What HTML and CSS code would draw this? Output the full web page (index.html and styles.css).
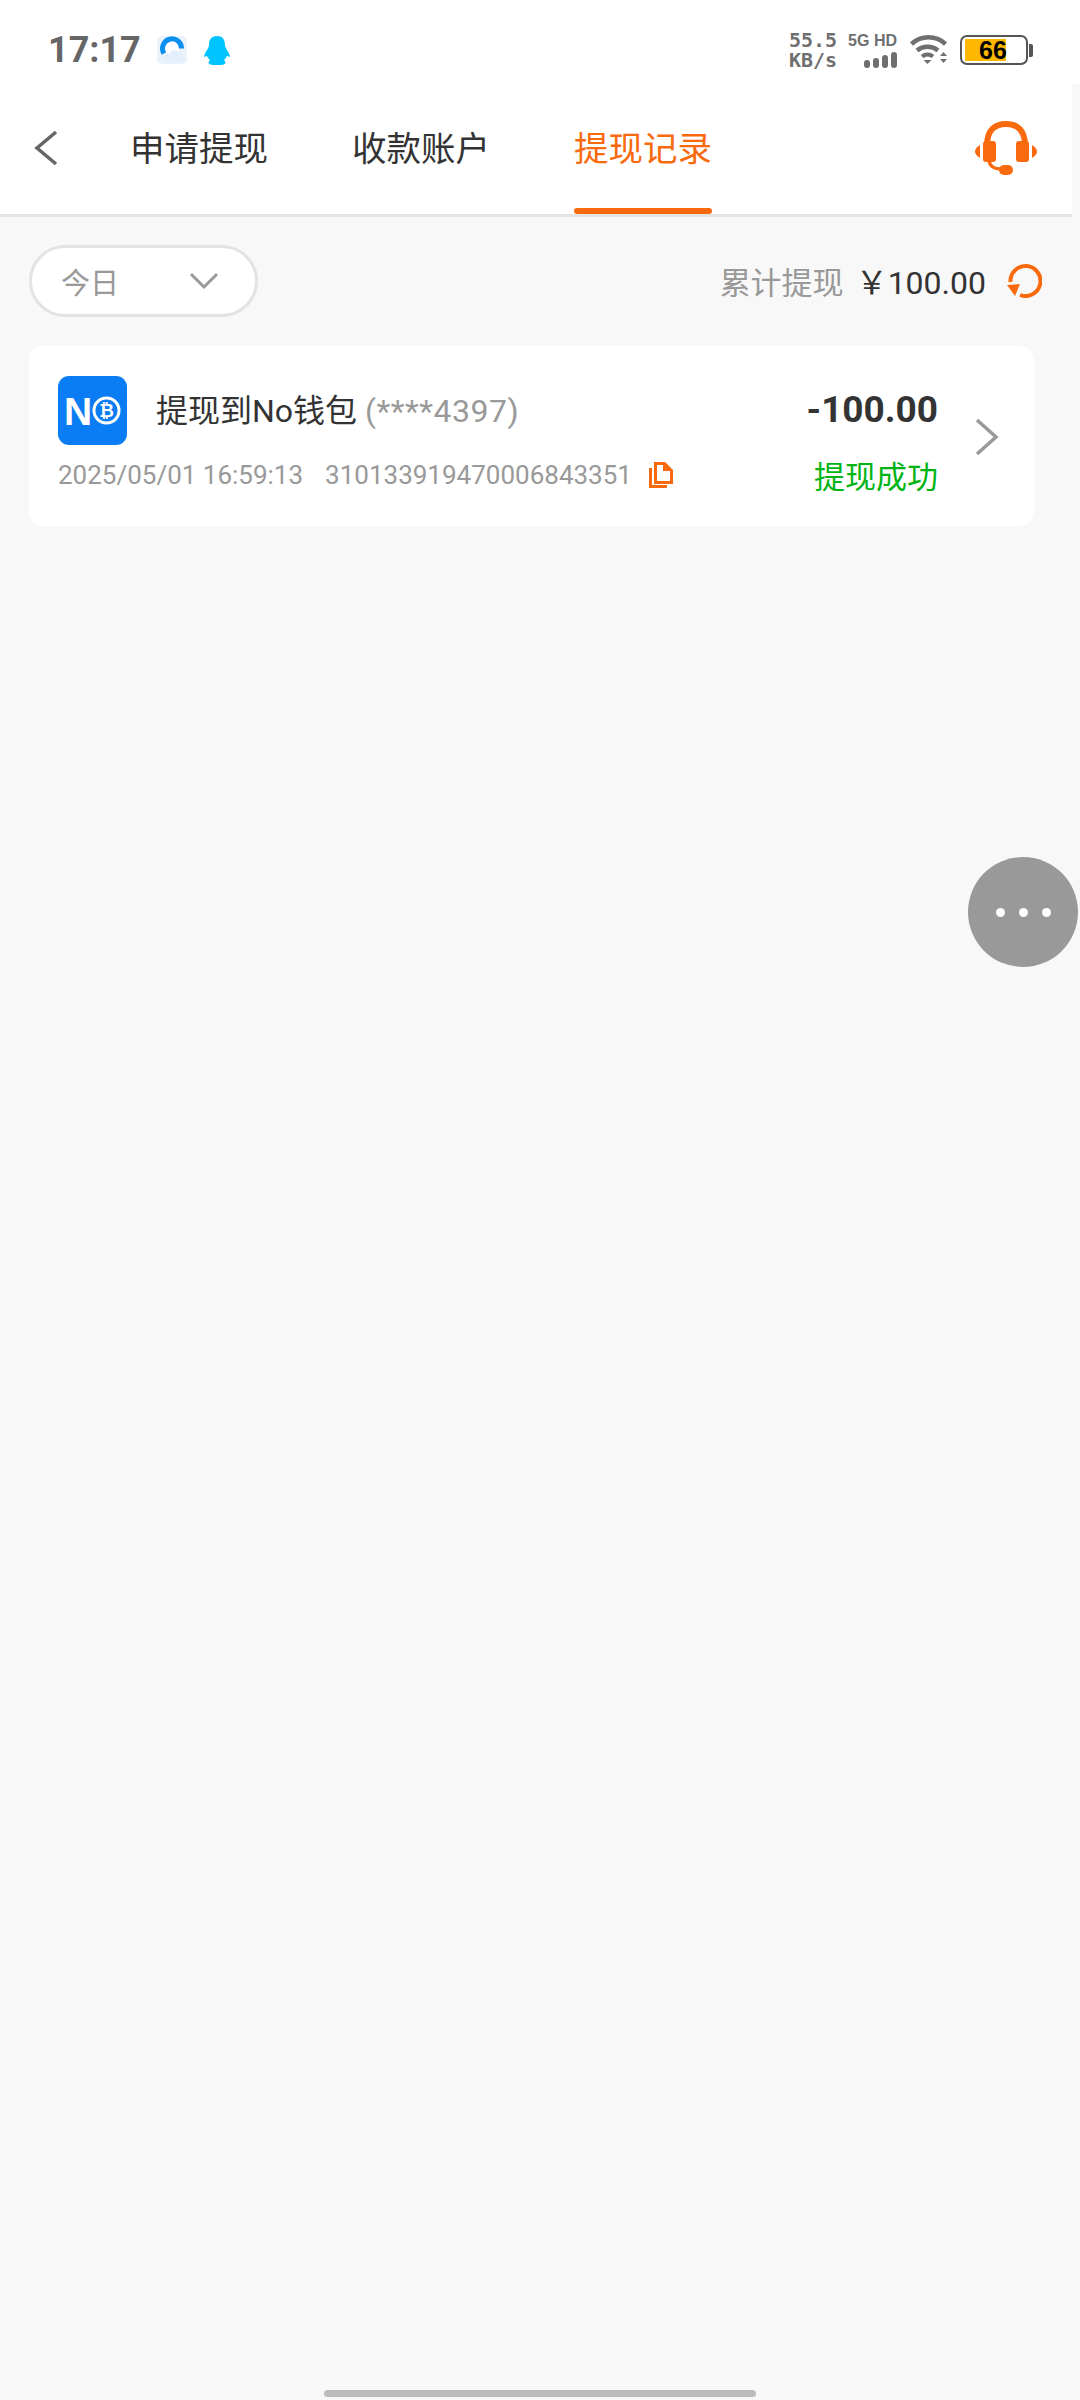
FILE: index.html
```html
<!DOCTYPE html>
<html lang="zh-CN">
<head>
    <meta charset="UTF-8">
    <meta name="viewport" content="width=device-width, initial-scale=1.0">
    <title>提现记录</title>
    <link rel="stylesheet" href="styles.css">
</head>
<body>
    <div class="page">
        <div class="status-bar">
            <div class="status-left">
                <span class="clock">17:17</span>
                <svg class="app-browser" width="30" height="28" viewBox="0 0 30 28">
                    <rect width="30" height="28" rx="5" fill="#eaf3fb"/>
                    <circle cx="15" cy="12" r="7" fill="#fff"/>
                    <path d="M7 17.500A9.500 9.500 0 1 1 24.500 12.500" fill="none" stroke="#0a8ff0" stroke-width="5"/>
                    <path d="M8 25c-3-3-1-8 4-7 2-5 8-5 10-1 4 0 6 4 5 8z" fill="#e3effa"/>
                </svg>
                <svg class="app-qq" width="26" height="29" viewBox="0 0 26 29">
                    <path d="M13 0c6 0 8 4 8 9 0 2 1 3 2 5 2 3 3 5 3 7l-3-1c-1 2-2 3-3 4 1 1 2 2 1 4-2 1-5 1-8 1s-6 0-8-1c-1-2 0-3 1-4-1-1-2-2-3-4l-3 1c0-2 1-4 3-7 1-2 2-3 2-5 0-5 2-9 8-9z" fill="#00c4ff"/>
                </svg>
            </div>
            <div class="status-right">
                <div class="net-speed"><span>55.5</span><span>KB/s</span></div>
                <div class="signal">
                    <span class="signal-label">5G HD</span>
                    <div class="signal-bars">
                        <i class="bar-1"></i><i class="bar-2"></i><i class="bar-3"></i><i class="bar-4"></i>
                    </div>
                </div>
                <svg class="wifi" width="37" height="30" viewBox="0 0 37 30">
                    <path d="M1.500 9a25 25 0 0 1 34 0" fill="none" stroke="#6f6f6f" stroke-width="4.500"/>
                    <path d="M7 15.500a17 17 0 0 1 21 0" fill="none" stroke="#6f6f6f" stroke-width="4.500"/>
                    <path d="M12 21.500a9 9 0 0 1 11 0" fill="none" stroke="#6f6f6f" stroke-width="4"/>
                    <path d="M13.500 25h8l-4 4z" fill="#6f6f6f"/>
                    <path d="M30 21l3.500-4 3.500 4zM30 24h7l-3.500 4z" fill="#6f6f6f"/>
                </svg>
                <div class="battery">
                    <div class="battery-body">
                        <div class="battery-fill"></div>
                        <span class="battery-num">66</span>
                    </div>
                    <div class="battery-cap"></div>
                </div>
            </div>
        </div>

        <div class="nav">
            <svg class="back" width="26" height="36" viewBox="0 0 26 36">
                <path d="M23 2 4 18l19 16" fill="none" stroke="#666" stroke-width="3.500"/>
            </svg>
            <div class="tabs">
                <span class="tab">申请提现</span>
                <span class="tab">收款账户</span>
                <span class="tab active">提现记录</span>
            </div>
            <svg class="support" width="62" height="54" viewBox="0 0 62 54">
                <path d="M12 24C12 9 20 3 31 3s19 6 19 21" fill="none" stroke="#f96a0e" stroke-width="6"/>
                <rect x="8" y="20" width="13" height="21" rx="3" fill="#f96a0e"/>
                <rect x="41" y="20" width="13" height="21" rx="3" fill="#f96a0e"/>
                <path d="M5 24v13C2 35 0 33 0 30.500S2 26 5 24zM57 24v13c3-2 5-4 5-6.500S60 26 57 24z" fill="#f96a0e"/>
                <path d="M14 40c1 6 5 8 12 8" fill="none" stroke="#f96a0e" stroke-width="3.500"/>
                <rect x="24" y="44" width="14" height="10" rx="5" fill="#f96a0e"/>
            </svg>
        </div>

        <div class="filter-row">
            <div class="filter-pill">
                <span>今日</span>
                <svg width="30" height="18" viewBox="0 0 30 18">
                    <path d="M2 2l13 13L28 2" fill="none" stroke="#999" stroke-width="3"/>
                </svg>
            </div>
            <div class="total">
                <span class="total-label">累计提现</span>
                <span class="total-value">￥100.00</span>
                <svg class="refresh" width="36" height="36" viewBox="0 0 36 36">
                    <path d="M4.500 20A15 15 0 1 1 14 33" fill="none" stroke="#f96a0e" stroke-width="4"/>
                    <path d="M1 23l13-1-5 12z" fill="#f96a0e"/>
                </svg>
            </div>
        </div>

        <div class="record">
            <div class="record-main">
                <div class="record-head">
                    <svg class="wallet-logo" width="69" height="69" viewBox="0 0 69 69">
                        <rect width="69" height="69" rx="11" fill="#0a7cf4"/>
                        <text x="6" y="49" class="logo-n">N</text>
                        <circle cx="48.500" cy="34.500" r="12.500" fill="none" stroke="#fff" stroke-width="3"/>
                        <text x="48.500" y="41" text-anchor="middle" class="logo-b">₿</text>
                    </svg>
                    <div class="record-title">提现到No钱包 <span class="record-account">(****4397)</span></div>
                </div>
                <div class="record-meta">
                    <span>2025/05/01 16:59:13</span>
                    <span>310133919470006843351</span>
                    <svg class="copy" width="24" height="26" viewBox="0 0 24 26">
                        <path d="M6.500 1.500h9l7 7v12h-16z" fill="none" stroke="#f96a0e" stroke-width="3"/>
                        <path d="M14 1l9 8h-9z" fill="#f96a0e"/>
                        <path d="M1.500 6v18.500H18" fill="none" stroke="#f96a0e" stroke-width="3"/>
                    </svg>
                </div>
            </div>
            <div class="record-side">
                <span class="amount">-100.00</span>
                <span class="state">提现成功</span>
            </div>
            <svg class="chevron" width="24" height="38" viewBox="0 0 24 38">
                <path d="M2 2l19 17L2 36" fill="none" stroke="#999" stroke-width="3.500"/>
            </svg>
        </div>

        <div class="float-btn"><i></i><i></i><i></i></div>
        <div class="home-bar"></div>
    </div>
</body>
</html>
```

FILE: styles.css
```css
* {
    box-sizing: border-box;
}

body {
    margin: 0;
    background: #f8f8f8;
    font-family: "Roboto", "Noto Sans CJK SC", sans-serif;
}

.page {
    position: relative;
    width: 1080px;
    height: 2400px;
    overflow: hidden;
    background: #f8f8f8;
}

.status-bar {
    height: 84px;
    padding: 16px 47px 0 48px;
    background: #fff;
    display: flex;
    justify-content: space-between;
    align-items: center;
}

.status-left {
    display: flex;
    align-items: center;
}

.clock {
    font-size: 36px;
    font-weight: 700;
    color: #666;
}

.app-browser {
    margin-left: 16px;
}

.app-qq {
    margin-left: 17px;
}

.status-right {
    display: flex;
    align-items: center;
}

.net-speed {
    display: flex;
    flex-direction: column;
    align-items: center;
    font-family: "DejaVu Sans Mono", monospace;
    font-size: 20px;
    line-height: 20px;
    color: #6f6f6f;
    font-weight: 700;
}

.signal {
    margin-left: 11px;
    display: flex;
    flex-direction: column;
    align-items: flex-end;
}

.signal-label {
    font-family: "Liberation Sans", sans-serif;
    font-size: 16px;
    line-height: 16px;
    font-weight: 700;
    color: #6f6f6f;
}

.signal-bars {
    margin-top: 3px;
    display: flex;
    align-items: flex-end;
    gap: 3px;
}

.signal-bars i {
    width: 6px;
    background: #6f6f6f;
    border-radius: 3px;
}

.bar-1 { height: 8px; }
.bar-2 { height: 10px; }
.bar-3 { height: 13px; }
.bar-4 { height: 16px; }

.wifi {
    margin-left: 13px;
}

.battery {
    margin-left: 13px;
    display: flex;
    align-items: center;
}

.battery-body {
    position: relative;
    width: 68px;
    height: 30px;
    border: 2px solid #555;
    border-radius: 7px;
    padding: 2px 3px;
}

.battery-fill {
    width: 41px;
    height: 22px;
    background: #ffb800;
}

.battery-num {
    position: absolute;
    left: 17px;
    top: 0;
    font-family: "Liberation Sans", sans-serif;
    font-size: 25px;
    line-height: 26px;
    font-weight: 700;
    color: #000;
}

.battery-cap {
    width: 4px;
    height: 13px;
    margin-left: 1px;
    background: #555;
    border-radius: 0 2px 2px 0;
}

.nav {
    width: 1072px;
    height: 133px;
    padding-right: 35px;
    padding-left: 33px;
    background: #fff;
    border-bottom: 3px solid #e3e3e3;
    display: flex;
    align-items: center;
}

.back {
    margin-bottom: 3px;
}

.tabs {
    margin-left: 71px;
    height: 100%;
    display: flex;
    gap: 84px;
    flex: 1;
}

.tab {
    height: 100%;
    padding-bottom: 6px;
    display: flex;
    align-items: center;
    font-size: 34.500px;
    color: #333;
}

.tab.active {
    color: #f96a0e;
    position: relative;
}

.tab.active::after {
    content: "";
    position: absolute;
    left: 0;
    right: 0;
    bottom: 0;
    height: 6px;
    background: #f96a0e;
    border-radius: 3px;
}

.support {
    margin-bottom: 3px;
}

.filter-row {
    margin-top: 28px;
    padding: 0 38px 0 29px;
    display: flex;
    justify-content: space-between;
    align-items: center;
}

.filter-pill {
    width: 229px;
    height: 72px;
    padding: 0 36px 0 29px;
    background: #fff;
    border: 3px solid #e3e3e3;
    border-radius: 36px;
    display: flex;
    justify-content: space-between;
    align-items: center;
    font-size: 29px;
    color: #999;
}

.total {
    display: flex;
    align-items: center;
    margin-bottom: 2px;
}

.total-label {
    font-size: 31px;
    color: #999;
}

.total-value {
    margin-left: 12px;
    font-size: 32px;
    color: #333;
}

.refresh {
    margin-left: 20px;
}

.record {
    width: 1005px;
    height: 180px;
    margin: 29px 0 0 29px;
    padding: 30px 35px 0 29px;
    background: #fff;
    border-radius: 14px;
    display: flex;
    align-items: flex-start;
}

.record-main {
    flex: 1;
}

.record-head {
    display: flex;
    align-items: center;
    gap: 29px;
}

.logo-n {
    font-family: "Liberation Sans", sans-serif;
    font-size: 39px;
    font-weight: 700;
    fill: #fff;
}

.logo-b {
    font-family: "DejaVu Sans", sans-serif;
    font-size: 18px;
    font-weight: 700;
    fill: #fff;
}

.record-title {
    margin-top: -5px;
    font-size: 32px;
    color: #333;
}

.record-account {
    color: #999;
    letter-spacing: 0.5px;
}

.record-meta {
    margin-top: 15px;
    display: flex;
    align-items: center;
    font-size: 26px;
    color: #999;
    gap: 22px;
}

.copy {
    margin-left: -5px;
}

.record-side {
    padding-top: 12px;
    display: flex;
    flex-direction: column;
    align-items: flex-end;
}

.amount {
    font-size: 37px;
    font-weight: 700;
    color: #333;
}

.state {
    margin-top: 21px;
    font-size: 31px;
    color: #00b414;
}

.chevron {
    margin-left: 37px;
    margin-top: 42px;
}

.float-btn {
    position: absolute;
    left: 968px;
    top: 857px;
    width: 110px;
    height: 110px;
    border-radius: 50%;
    background: #999;
    display: flex;
    justify-content: center;
    align-items: center;
    gap: 14px;
}

.float-btn i {
    width: 9px;
    height: 9px;
    border-radius: 50%;
    background: #fff;
}

.home-bar {
    position: absolute;
    left: 324px;
    top: 2390px;
    width: 432px;
    height: 7px;
    border-radius: 4px;
    background: #bbb;
}
```
